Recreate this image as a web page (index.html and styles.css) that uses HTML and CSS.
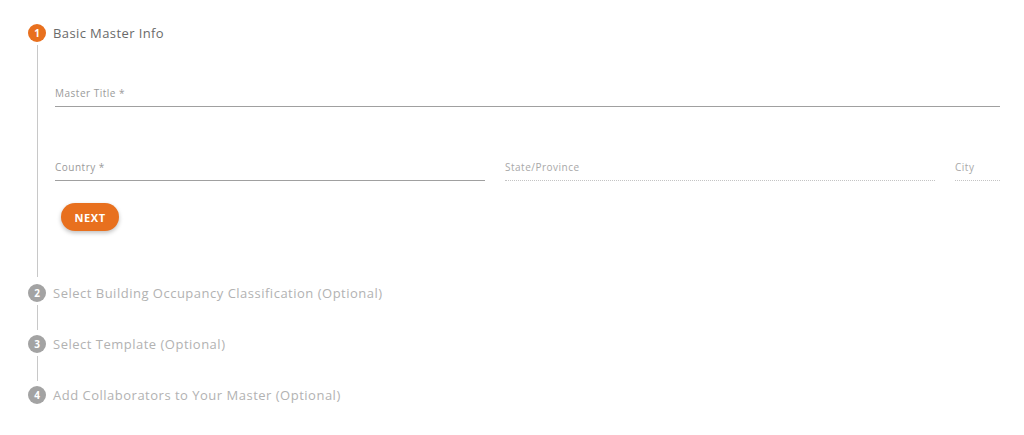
FILE: index.html
```html
<!DOCTYPE html>
<html>
<head>
<meta charset="utf-8">
<link rel="stylesheet" href="styles.css">
</head>
<body>
<div class="stepper">
  <div class="step">
    <div class="step-head">
      <span class="badge active">1</span>
      <span class="step-title active">Basic Master Info</span>
    </div>
    <div class="step-body">
      <div class="field">
        <div class="label">Master Title *</div>
      </div>
      <div class="row">
        <div class="field">
          <div class="label">Country *</div>
        </div>
        <div class="field disabled">
          <div class="label">State/Province</div>
        </div>
        <div class="field disabled">
          <div class="label">City</div>
        </div>
      </div>
      <button class="btn">NEXT</button>
    </div>
  </div>
  <div class="step">
    <div class="step-head">
      <span class="badge">2</span>
      <span class="step-title">Select Building Occupancy Classification (Optional)</span>
    </div>
    <div class="connector"></div>
  </div>
  <div class="step">
    <div class="step-head">
      <span class="badge">3</span>
      <span class="step-title">Select Template (Optional)</span>
    </div>
    <div class="connector"></div>
  </div>
  <div class="step">
    <div class="step-head">
      <span class="badge">4</span>
      <span class="step-title">Add Collaborators to Your Master (Optional)</span>
    </div>
  </div>
</div>
</body>
</html>
```

FILE: styles.css
```css
html, body {
  margin: 0;
  padding: 0;
  background: #ffffff;
  font-family: "Open Sans", "Liberation Sans", sans-serif;
}
.stepper {
  padding: 24px 24px 0 28px;
}
.step-head {
  display: flex;
  align-items: center;
  gap: 7px;
  height: 18px;
}
.badge {
  width: 18px;
  height: 18px;
  border-radius: 50%;
  background: #a3a3a3;
  color: #fff;
  font-size: 10px;
  font-weight: 700;
  display: flex;
  align-items: center;
  justify-content: center;
  flex: none;
}
.badge.active {
  background: #e8701e;
}
.step-title {
  font-size: 13px;
  color: #b2b2b2;
  letter-spacing: 0.5px;
  line-height: 18px;
}
.step-title.active {
  color: #6a6a6a;
  letter-spacing: 0.4px;
}
.step-body {
  margin: 3px 0 7px 9px;
  border-left: 1px solid #c8c8c8;
  padding: 41px 0 46px 17px;
}
.field {
  border-bottom: 1px solid #a0a0a0;
  padding-bottom: 6px;
}
.field.disabled {
  border-bottom: 1px dotted #c4c4c4;
}
.label {
  font-size: 10px;
  line-height: 14px;
  color: #9a9a9a;
  letter-spacing: 0.5px;
}
.field.disabled .label {
  color: #a8a8a8;
}
.row {
  display: grid;
  grid-template-columns: 1fr 1fr 45px;
  gap: 20px;
  margin-top: 53px;
}
.btn {
  margin: 22px 0 0 6px;
  width: 58px;
  height: 28px;
  border: none;
  border-radius: 14px;
  background: #e8701e;
  color: #fff;
  font-family: "Open Sans", "Liberation Sans", sans-serif;
  font-size: 11px;
  font-weight: 700;
  letter-spacing: 0.6px;
  box-shadow: 0 2px 4px rgba(0,0,0,0.25);
  padding: 0;
  display: block;
}
.connector {
  margin: 3px 0 5px 9px;
  border-left: 1px solid #c8c8c8;
  height: 25px;
}
```
